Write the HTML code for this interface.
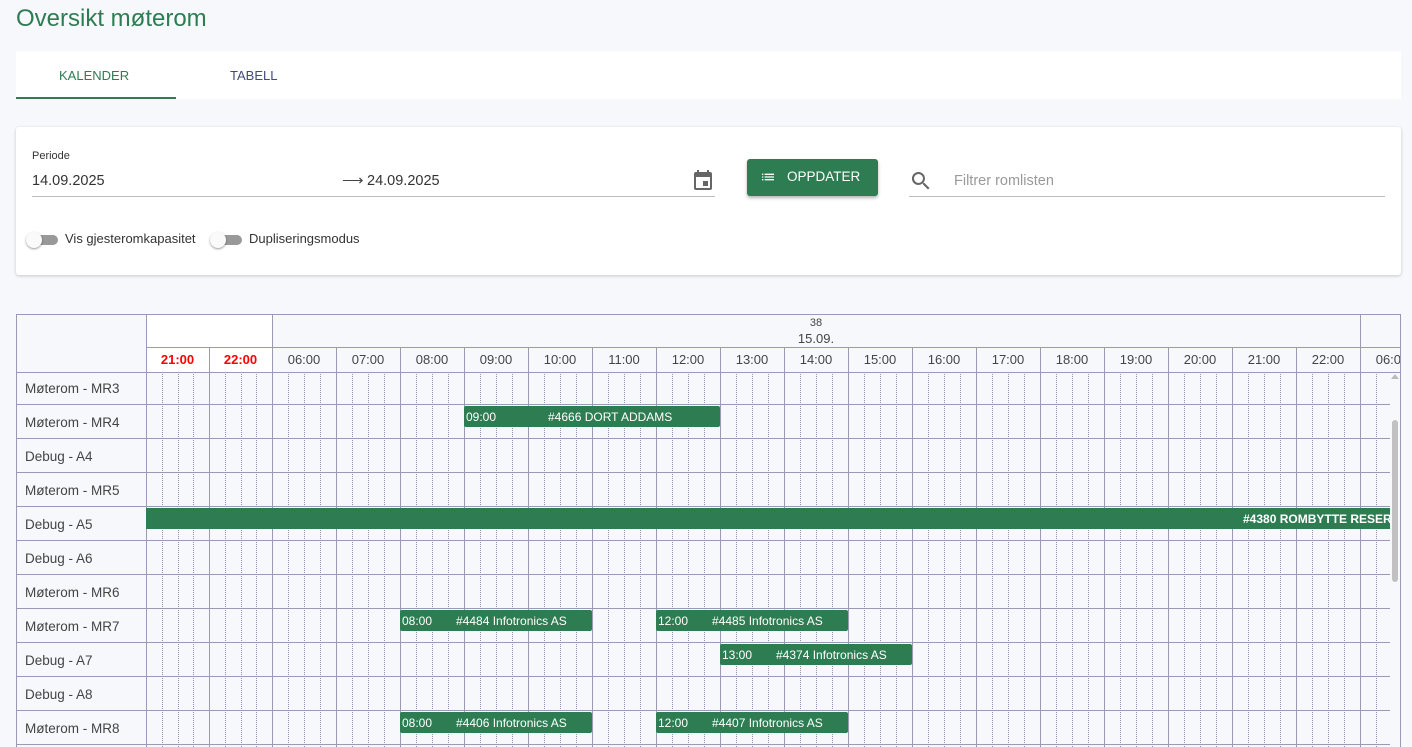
<!DOCTYPE html>
<html><head><meta charset="utf-8"><style>
*{box-sizing:border-box;margin:0;padding:0}
body{width:1412px;height:747px;overflow:hidden;background:#f7f8fc;font-family:"Liberation Sans",sans-serif;color:#333;position:relative}
.a{position:absolute}
h1{position:absolute;left:16px;top:5px;font-size:24px;font-weight:normal;color:#2e7d52}
.card{background:#fff;position:absolute}
.ev{position:absolute;background:#2e7d52;color:#fff;font-size:12px;height:21px;line-height:23px;border-radius:2px;white-space:nowrap;overflow:hidden}
.hl{position:absolute;height:1px;background:#9a9ab8}
.vl{position:absolute;width:1px;background:#9a9ab8}
.dl{position:absolute;width:0;border-left:1px dotted #9090b0}
.t{position:absolute;font-size:13px;text-align:center;width:63px;top:352px}
.rl{position:absolute;left:25px;font-size:13.5px;color:#444}
</style></head><body>
<h1>Oversikt møterom</h1>
<div class="card" style="left:16px;top:51px;width:1385px;height:48px">
 <div class="a" style="left:43px;top:17px;font-size:13px;color:#2e7d52">KALENDER</div>
 <div class="a" style="left:214px;top:17px;font-size:13px;color:#444a7a">TABELL</div>
 <div class="a" style="left:0;top:46px;width:160px;height:2px;background:#2e7d52"></div>
</div>
<div class="card" style="left:16px;top:127px;width:1385px;height:148px;box-shadow:0 1px 3px rgba(0,0,0,.2);border-radius:3px">
 <div class="a" style="left:16px;top:23px;font-size:11px;color:#333">Periode</div>
 <div class="a" style="left:16px;top:46px;font-size:14.5px;color:#333">14.09.2025</div>
 <div class="a" style="left:326px;top:44px;font-size:15px;color:#444">⟶</div>
 <div class="a" style="left:351px;top:46px;font-size:14.5px;color:#333">24.09.2025</div>
 <div class="a" style="left:16px;top:69px;width:683px;height:1px;background:#bbb"></div>
 <svg class="a" style="left:675px;top:41px" width="24" height="24" viewBox="0 0 24 24"><path fill="#666" d="M19 4h-1V2h-2v2H8V2H6v2H5a2 2 0 0 0-2 2v14a2 2 0 0 0 2 2h14a2 2 0 0 0 2-2V6a2 2 0 0 0-2-2zm0 16H5V9h14zm-7-7h5v5h-5z"/></svg>
 <div class="a" style="left:731px;top:32px;width:131px;height:37px;background:#2e7d52;border-radius:3px;box-shadow:0 2px 3px rgba(0,0,0,.3);color:#fff;font-size:13.5px;line-height:36px;padding-left:40px">OPPDATER</div>
 <svg class="a" style="left:744px;top:42px" width="16" height="16" viewBox="0 0 24 24"><path fill="#fff" d="M3 13h2v-2H3zm0 4h2v-2H3zm0-8h2V7H3zm4 4h14v-2H7zm0 4h14v-2H7zM7 7v2h14V7z"/></svg>
 <svg class="a" style="left:893px;top:42px" width="24" height="24" viewBox="0 0 24 24"><path fill="#666" d="M15.5 14h-.8l-.3-.3A6.5 6.5 0 1 0 9.5 16a6.5 6.5 0 0 0 4.2-1.6l.3.3v.8l5 5 1.5-1.5zm-6 0A4.5 4.5 0 1 1 14 9.5 4.5 4.5 0 0 1 9.5 14z"/></svg>
 <div class="a" style="left:938px;top:46px;font-size:14.5px;color:#999">Filtrer romlisten</div>
 <div class="a" style="left:893px;top:69px;width:476px;height:1px;background:#bbb"></div>
 <div class="a" style="left:12px;top:108px;width:30px;height:10px;border-radius:5px;background:#999"></div>
 <div class="a" style="left:10px;top:105px;width:16px;height:16px;border-radius:50%;background:#fafafa;box-shadow:0 1px 2px rgba(0,0,0,.4)"></div>
 <div class="a" style="left:49px;top:104px;font-size:13px;color:#333">Vis gjesteromkapasitet</div>
 <div class="a" style="left:196px;top:108px;width:30px;height:10px;border-radius:5px;background:#999"></div>
 <div class="a" style="left:194px;top:105px;width:16px;height:16px;border-radius:50%;background:#fafafa;box-shadow:0 1px 2px rgba(0,0,0,.4)"></div>
 <div class="a" style="left:233px;top:104px;font-size:13px;color:#333">Dupliseringsmodus</div>
</div>
<div class="a" style="left:146px;top:314px;width:126px;height:33px;background:#fff"></div>
<div class="a" style="left:146px;top:347px;width:126px;height:25px;background:#fff"></div>
<div class="a" style="left:780px;top:317px;width:72px;text-align:center;font-size:11px;color:#444">38</div>
<div class="a" style="left:780px;top:331px;width:72px;text-align:center;font-size:13px;color:#444">15.09.</div>
<div id="g"></div>
<div class="rl" style="top:381px">Møterom - MR3</div>
<div class="rl" style="top:415px">Møterom - MR4</div>
<div class="rl" style="top:449px">Debug - A4</div>
<div class="rl" style="top:483px">Møterom - MR5</div>
<div class="rl" style="top:517px">Debug - A5</div>
<div class="rl" style="top:551px">Debug - A6</div>
<div class="rl" style="top:585px">Møterom - MR6</div>
<div class="rl" style="top:619px">Møterom - MR7</div>
<div class="rl" style="top:653px">Debug - A7</div>
<div class="rl" style="top:687px">Debug - A8</div>
<div class="rl" style="top:721px">Møterom - MR8</div>
<div class="ev" style="left:464px;top:406px;width:256px"><span style="padding-left:2px">09:00</span><span style="position:absolute;left:84px">#4666 DORT ADDAMS</span></div>
<div class="ev" style="left:146px;top:508px;width:1244px;border-radius:0;font-weight:bold"><span style="position:absolute;left:1097px">#4380 ROMBYTTE RESERVASJON</span></div>
<div class="ev" style="left:400px;top:610px;width:192px"><span style="padding-left:2px">08:00</span><span style="position:absolute;left:56px">#4484 Infotronics AS</span></div>
<div class="ev" style="left:656px;top:610px;width:192px"><span style="padding-left:2px">12:00</span><span style="position:absolute;left:56px">#4485 Infotronics AS</span></div>
<div class="ev" style="left:720px;top:644px;width:192px"><span style="padding-left:2px">13:00</span><span style="position:absolute;left:56px">#4374 Infotronics AS</span></div>
<div class="ev" style="left:400px;top:712px;width:192px"><span style="padding-left:2px">08:00</span><span style="position:absolute;left:56px">#4406 Infotronics AS</span></div>
<div class="ev" style="left:656px;top:712px;width:192px"><span style="padding-left:2px">12:00</span><span style="position:absolute;left:56px">#4407 Infotronics AS</span></div>
<div class="a" style="left:1392px;top:420px;width:6px;height:162px;background:#c1c1c1;border-radius:3px"></div>
<div class="a" style="left:1391px;top:374px;width:0;height:0;border-left:4px solid transparent;border-right:4px solid transparent;border-bottom:5px solid #bbb"></div>
<script>
var g=document.getElementById('g'),h='';
function d(c,s){h+='<div class="'+c+'" style="'+s+'"></div>';}
d('hl','left:16px;top:314px;width:1385px');
d('hl','left:146px;top:347px;width:1255px');
d('hl','left:16px;top:372px;width:1385px');
d('vl','left:16px;top:314px;height:433px');
d('vl','left:1400px;top:314px;height:433px');
d('vl','left:146px;top:314px;height:433px');
d('vl','left:272px;top:314px;height:433px');
d('vl','left:1360px;top:314px;height:433px');
var rows=[404,438,472,506,540,574,608,642,676,710,744];
rows.forEach(function(y){d('hl','left:16px;top:'+y+'px;width:1374px');});
var cols=[[146,'21:00',1],[209,'22:00',1]];
var labs=['06:00','07:00','08:00','09:00','10:00','11:00','12:00','13:00','14:00','15:00','16:00','17:00','18:00','19:00','20:00','21:00','22:00','06:00'];
labs.forEach(function(l,i){cols.push([272+i*64,l,0]);});
cols.forEach(function(c,i){
 var x=c[0],w=(i<2?63:64);
 if(i>0) d('vl','left:'+x+'px;top:347px;height:400px');
 h+='<div class="t" style="left:'+x+'px;width:'+w+'px;'+(c[2]?'color:#f00;font-weight:bold':'color:#444')+'">'+c[1]+'</div>';
 for(var k=1;k<4;k++){var xx=x+Math.round(k*w/4);if(xx<1390)d('dl','left:'+xx+'px;top:374px;height:373px');}
});
g.innerHTML=h;
</script>
<div class="a" style="left:1400px;top:314px;width:12px;height:433px;background:#f7f8fc"></div>
<div class="a" style="left:1400px;top:314px;width:1px;height:433px;background:#9a9ab8"></div>
<div class="a" style="left:16px;top:314px;width:1385px;height:1px;background:#9a9ab8"></div>
</body></html>
